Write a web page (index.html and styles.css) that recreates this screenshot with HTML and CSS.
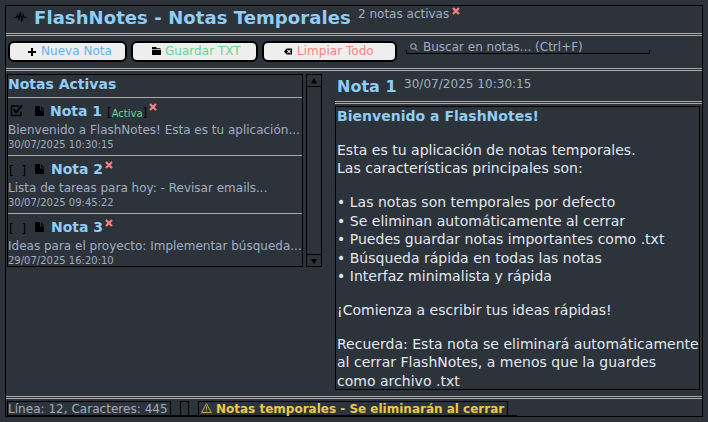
FILE: index.html
```html
<!DOCTYPE html>
<html lang="es">
<head>
<meta charset="utf-8">
<title>FlashNotes</title>
<link rel="stylesheet" href="styles.css">
</head>
<body>
<svg width="0" height="0" class="defs">
  <symbol id="x" viewBox="0 0 8 8"><path d="M1 1l6 6M7 1L1 7" fill="none" stroke="#fc8181" stroke-width="2.200"/></symbol>
  <symbol id="file" viewBox="0 0 9 10"><path d="M0 0h5v4.600h4V10H0zM6 0l3 3.600H6z"/></symbol>
</svg>
<div class="window">
  <header class="header">
    <svg class="pulse" viewBox="0 0 13 12"><path d="M0 6.500h2.200L3.700 3.500l1.300 5.500L6.500 .8l1.400 10L9.300 4l1 2.500H13" fill="none" stroke="#000" stroke-width="1.100"/></svg>
    <h1 class="title">FlashNotes - Notas Temporales</h1>
    <span class="count">2 notas activas</span>
    <svg class="close"><use href="#x"/></svg>
  </header>
  <div class="rule"></div>
  <div class="toolbar">
    <button class="btn new"><svg viewBox="0 0 8 8"><path d="M3 0h2v3h3v2H5v3H3V5H0V3h3z"/></svg>Nueva Nota</button>
    <button class="btn save"><svg viewBox="0 0 9 8"><path d="M0 0h4l1 1.200h3.500V2H0zM0 2.700h9V8H0z"/></svg>Guardar TXT</button>
    <button class="btn clear"><svg viewBox="0 0 9 7"><path d="M3 0h6v7H3L0 3.500z"/><path d="M3.800 1.700l3.500 3.600M7.300 1.700L3.800 5.300" stroke="#eee" stroke-width="1.200"/></svg>Limpiar Todo</button>
    <div class="search"><svg viewBox="0 0 9 9"><path d="M6 6l2.500 2.500M6.800 3.800a3 3 0 1 1-6 0a3 3 0 0 1 6 0z" fill="none" stroke="#8e9bae" stroke-width="1.300"/></svg><span>Buscar en notas... (Ctrl+F)</span></div>
  </div>
  <div class="rule"></div>
  <main class="main">
    <section class="list">
      <h2 class="list-title">Notas Activas</h2>
      <article class="note first">
        <div class="note-head"><svg class="check" viewBox="0 0 13 12"><path d="M9 1.500H1.500v9.500h9.500V7" fill="none" stroke="#000" stroke-width="1.500"/><path d="M3.500 4.500l2.700 3.500L12 .8" fill="none" stroke="#000" stroke-width="2"/></svg><svg class="file"><use href="#file"/></svg><b>Nota 1</b><span class="badge"><i>[</i>Activa<i>]</i></span><svg class="close"><use href="#x"/></svg></div>
        <p class="preview">Bienvenido a FlashNotes! Esta es tu aplicación...</p>
        <time class="date">30/07/2025 10:30:15</time>
      </article>
      <article class="note">
        <div class="note-head"><span class="box">[ ]</span><svg class="file"><use href="#file"/></svg><b>Nota 2</b><svg class="close"><use href="#x"/></svg></div>
        <p class="preview">Lista de tareas para hoy: - Revisar emails...</p>
        <time class="date">30/07/2025 09:45:22</time>
      </article>
      <article class="note">
        <div class="note-head"><span class="box">[ ]</span><svg class="file"><use href="#file"/></svg><b>Nota 3</b><svg class="close"><use href="#x"/></svg></div>
        <p class="preview">Ideas para el proyecto: Implementar búsqueda...</p>
        <time class="date">29/07/2025 16:20:10</time>
      </article>
    </section>
    <div class="scrollbar">
      <svg viewBox="0 0 14 11"><path d="M4 8.500L7 3l3 5.500z"/></svg>
      <svg viewBox="0 0 14 11"><path d="M4 4l3 5 3-5z"/></svg>
    </div>
    <section class="detail">
      <div class="detail-head"><h2>Nota 1</h2><time>30/07/2025 10:30:15</time></div>
      <div class="rule"></div>
      <div class="editor">
        <p class="lead">Bienvenido a FlashNotes!</p>
        <p class="gap"></p>
        <p>Esta es tu aplicación de notas temporales.</p>
        <p>Las características principales son:</p>
        <p class="gap"></p>
        <p>• Las notas son temporales por defecto</p>
        <p>• Se eliminan automáticamente al cerrar</p>
        <p>• Puedes guardar notas importantes como .txt</p>
        <p>• Búsqueda rápida en todas las notas</p>
        <p>• Interfaz minimalista y rápida</p>
        <p class="gap"></p>
        <p>¡Comienza a escribir tus ideas rápidas!</p>
        <p class="gap"></p>
        <p>Recuerda: Esta nota se eliminará automáticamente</p>
        <p>al cerrar FlashNotes, a menos que la guardes</p>
        <p>como archivo .txt</p>
      </div>
    </section>
  </main>
  <div class="rule"></div>
  <footer class="status">
    <span class="cell info">Línea: 12, Caracteres: 445</span><span class="line"></span><span class="cell empty"></span><span class="line"></span><span class="cell warn"><svg viewBox="0 0 11 10"><path d="M5.500 .7L10.300 9.500H.7zM5.500 3.500v3.300M5.500 7.500v1" fill="none" stroke="#ecc94b" stroke-width=".8"/></svg>Notas temporales - Se eliminarán al cerrar</span><span class="line"></span>
  </footer>
</div>
</body>
</html>
```
FILE: styles.css
```css
* { box-sizing: border-box; margin: 0; padding: 0; }
body { width: 708px; height: 422px; padding: 5px; background: #2d333b; color: #a0aec0; font: 12px/14px "DejaVu Sans", sans-serif; overflow: hidden; white-space: nowrap; }
svg { display: block; flex: none; overflow: visible; }
.defs { position: absolute; }
.window { width: 698px; height: 412px; border: 1px solid #000; }
.rule { height: 3px; border-top: 1px solid #aaa; border-bottom: 1px solid #aaa; }
.close { width: 8px; height: 8px; }

.header { display: flex; height: 27px; padding-left: 8px; }
.pulse { width: 13px; height: 12px; margin-top: 5px; }
.title { width: 317px; margin: 1px 7px 0 7px; font-size: 18px; line-height: 21px; letter-spacing: .08px; color: #90cdf4; }
.count { margin-top: 1px; }
.header .close { margin: 1px 0 0 3px; }

.toolbar { display: flex; height: 32px; padding: 5px 0 0 2px; }
.btn { display: flex; height: 21px; margin-right: 4px; border: 2.5px solid #000; border-radius: 6px; background: #eee; font: 12px/14px "DejaVu Sans", sans-serif; letter-spacing: .03px; padding-top: 1px; padding-bottom: 2px; }
.btn svg { margin-right: 5px; }
.new { width: 119px; padding-left: 18px; color: #63b3ed; }
.new svg { width: 8px; height: 8px; margin-top: 4px; }
.save { width: 127px; padding-left: 19px; color: #68d391; }
.save svg { width: 9px; height: 8px; margin: 3px 4px 0 0; }
.clear { width: 135px; padding-left: 20px; color: #fc8181; }
.clear svg { width: 8px; height: 7px; margin-top: 4px; }
.search { display: flex; width: 244px; height: 14px; margin: -1px 0 0 5px; padding-left: 4px; border-bottom: 1px solid #000; background: linear-gradient(#000, #000) 0 100% / 1px 3px no-repeat, linear-gradient(#000, #000) 100% 100% / 1px 3px no-repeat; }
.search svg { width: 8px; height: 8px; margin: 3px 5px 0 0; }

.main { display: flex; height: 325px; padding: 3px 0 0 1px; }
.list { width: 296px; height: 193px; border: 1px solid #000; }
.list-title { height: 22px; padding-top: 1px; font-size: 14px; line-height: 16px; color: #90cdf4; }
.note { height: 58px; border-top: 1px solid #aaa; }
.note-head { display: flex; height: 25px; }
.note-head b { margin-top: 5px; width: 52px; font-size: 14px; line-height: 16px; color: #90cdf4; }
.note-head .close { margin: 5px 0 0 2px; }
.check { width: 13px; height: 13px; margin: 6px 0 0 2px; }
.box { width: 18px; margin-top: 8px; margin-left: 1px; color: #000; line-height: 14px; word-spacing: 4px; }
.box + .file { margin-left: 8px; }
.file { width: 9px; height: 10px; margin: 8px 7px 0 12px; }
.first .file { margin-right: 6px; }
.badge { margin: 10px 0 0 5px; font-size: 10px; line-height: 11px; color: #68d391; }
.badge i { font-style: normal; font-size: 12px; color: #000; }
.preview { height: 16px; }
.date { display: block; font-size: 10px; line-height: 11px; }

.scrollbar { display: flex; flex-direction: column; justify-content: space-between; width: 16px; height: 193px; margin-left: 3px; border: 1px solid #000; }
.scrollbar svg { width: 14px; height: 12px; border-bottom: 1px solid #000; }
.scrollbar svg:last-child { border: 0; border-top: 1px solid #000; }

.detail { width: 367px; margin-left: 13px; }
.detail-head { display: flex; height: 27px; padding-left: 2px; }
.detail-head h2 { width: 60px; margin: 3px 7px 0 0; font-size: 16px; line-height: 19px; color: #90cdf4; }
.detail-head time { margin-top: 3px; letter-spacing: .03px; }
.editor { width: 365px; height: 284px; margin-top: 2px; padding: 1px 0 0 1px; border: 1px solid #000; color: #e2e8f0; font-size: 14px; letter-spacing: .02px; }
.editor p { height: 18.4px; line-height: 16px; }
.editor .gap { height: 15.6px; }
.editor .lead { color: #90cdf4; font-weight: bold; }

.status { display: flex; height: 17px; padding: 2px 0 0 1px; }
.cell { display: flex; height: 15px; border: 1px solid #000; padding-left: 1px; }
.info { width: 164px; padding-left: 0; letter-spacing: .03px; }
.empty { width: 9px; }
.warn { width: 310px; padding-left: 2px; font-weight: bold; color: #ecc94b; }
.warn svg { width: 11px; height: 10px; margin: 1px 4px 0 0; }
.line { width: 9px; height: 15px; border-bottom: 1px solid #000; }
```
